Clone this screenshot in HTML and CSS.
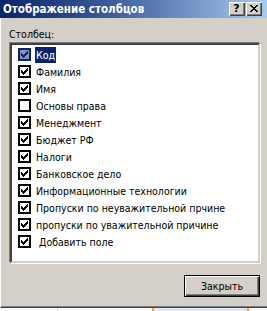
FILE: index.html
```html
<!DOCTYPE html>
<html>
<head>
<meta charset="utf-8">
<link rel="stylesheet" href="styles.css">
</head>
<body>
<div class="window">
  <div class="titlebar">
    <span class="title">Отображение столбцов</span>
    <div class="tbtns">
      <span class="tbtn help">?</span>
      <span class="tbtn close"><svg width="8" height="7" viewBox="0 0 8 7"><path d="M0 0h2v1h-2z M6 0h2v1h-2z M1 1h2v1h-2z M5 1h2v1h-2z M2 2h4v1h-4z M3 3h2v1h-2z M2 4h4v1h-4z M1 5h2v1h-2z M5 5h2v1h-2z M0 6h2v1h-2z M6 6h2v1h-2z" fill="#000"/></svg></span>
    </div>
  </div>
  <div class="content">
    <div class="label">Столбец:</div>
    <div class="listbox">
      <div class="row selected"><span class="cb"><svg width="7" height="7" viewBox="0 0 7 7"><path d="M0 2V5H1V6H2V7H3V6H4V5H5V4H6V3H7V0H6V1H5V2H4V3H3V4H2V3H1V2Z"/></svg></span><span class="txt">Код</span></div>
      <div class="row"><span class="cb"><svg width="7" height="7" viewBox="0 0 7 7"><path d="M0 2V5H1V6H2V7H3V6H4V5H5V4H6V3H7V0H6V1H5V2H4V3H3V4H2V3H1V2Z"/></svg></span><span class="txt">Фамилия</span></div>
      <div class="row"><span class="cb"><svg width="7" height="7" viewBox="0 0 7 7"><path d="M0 2V5H1V6H2V7H3V6H4V5H5V4H6V3H7V0H6V1H5V2H4V3H3V4H2V3H1V2Z"/></svg></span><span class="txt">Имя</span></div>
      <div class="row"><span class="cb"></span><span class="txt">Основы права</span></div>
      <div class="row"><span class="cb"><svg width="7" height="7" viewBox="0 0 7 7"><path d="M0 2V5H1V6H2V7H3V6H4V5H5V4H6V3H7V0H6V1H5V2H4V3H3V4H2V3H1V2Z"/></svg></span><span class="txt">Менеджмент</span></div>
      <div class="row"><span class="cb"><svg width="7" height="7" viewBox="0 0 7 7"><path d="M0 2V5H1V6H2V7H3V6H4V5H5V4H6V3H7V0H6V1H5V2H4V3H3V4H2V3H1V2Z"/></svg></span><span class="txt">Бюджет РФ</span></div>
      <div class="row"><span class="cb"><svg width="7" height="7" viewBox="0 0 7 7"><path d="M0 2V5H1V6H2V7H3V6H4V5H5V4H6V3H7V0H6V1H5V2H4V3H3V4H2V3H1V2Z"/></svg></span><span class="txt">Налоги</span></div>
      <div class="row"><span class="cb"><svg width="7" height="7" viewBox="0 0 7 7"><path d="M0 2V5H1V6H2V7H3V6H4V5H5V4H6V3H7V0H6V1H5V2H4V3H3V4H2V3H1V2Z"/></svg></span><span class="txt">Банковское дело</span></div>
      <div class="row"><span class="cb"><svg width="7" height="7" viewBox="0 0 7 7"><path d="M0 2V5H1V6H2V7H3V6H4V5H5V4H6V3H7V0H6V1H5V2H4V3H3V4H2V3H1V2Z"/></svg></span><span class="txt">Информационные технологии</span></div>
      <div class="row"><span class="cb"><svg width="7" height="7" viewBox="0 0 7 7"><path d="M0 2V5H1V6H2V7H3V6H4V5H5V4H6V3H7V0H6V1H5V2H4V3H3V4H2V3H1V2Z"/></svg></span><span class="txt">Пропуски по неуважительной прчине</span></div>
      <div class="row"><span class="cb"><svg width="7" height="7" viewBox="0 0 7 7"><path d="M0 2V5H1V6H2V7H3V6H4V5H5V4H6V3H7V0H6V1H5V2H4V3H3V4H2V3H1V2Z"/></svg></span><span class="txt">пропуски по уважительной причине</span></div>
      <div class="row"><span class="cb"><svg width="7" height="7" viewBox="0 0 7 7"><path d="M0 2V5H1V6H2V7H3V6H4V5H5V4H6V3H7V0H6V1H5V2H4V3H3V4H2V3H1V2Z"/></svg></span><span class="txt">&nbsp;Добавить поле</span></div>
    </div>
    <div class="footer">
      <button class="btn">Закрыть</button>
    </div>
  </div>
</div>
<div class="under">
  <span class="u1"></span><span class="u2"></span><span class="u3"></span><span class="u4"></span>
</div>
</body>
</html>
```
FILE: styles.css
```css
html, body {
  margin: 0;
  padding: 0;
}
body {
  width: 267px;
  height: 311px;
  overflow: hidden;
  background: #fbfbfb;
  font-family: "DejaVu Sans Condensed", "DejaVu Sans", Verdana, sans-serif;
  font-size: 10.5px;
  color: #000;
}
.window {
  width: 267px;
  height: 308px;
  box-sizing: border-box;
  background: #d4d0c8;
  border-left: 1px solid #fff;
  border-bottom: 1px solid #404040;
  box-shadow: inset 0 -1px 0 #808080;
  display: flex;
  flex-direction: column;
}
.titlebar {
  height: 18px;
  margin-left: -1px;
  padding-left: 3px;
  background: linear-gradient(to right, #0a246a, #3a5a98 40%, #a6caf0);
  display: flex;
  align-items: center;
  justify-content: space-between;
}
.title {
  color: #fff;
  font-weight: bold;
  font-size: 11.5px;
  line-height: 18px;
}
.tbtns {
  display: flex;
  gap: 1px;
  padding-right: 5px;
}
.tbtn {
  width: 16px;
  height: 14px;
  box-sizing: border-box;
  background: #d4d0c8;
  box-shadow: inset 1px 1px 0 #fff, inset -1px -1px 0 #404040, inset -2px -2px 0 #808080;
  display: flex;
  align-items: center;
  justify-content: center;
}
.help {
  font-family: "DejaVu Sans", sans-serif;
  font-weight: bold;
  font-size: 11px;
  line-height: 14px;
  padding-right: 1px;
}
.close svg {
  display: block;
  margin-top: -1px;
}
.content {
  padding: 10px 7px 0 8px;
  display: flex;
  flex-direction: column;
}
.label {
  line-height: 13px;
  height: 13px;
  margin-bottom: 2px;
}
.listbox {
  height: 220px;
  box-sizing: border-box;
  background: #fff;
  border: 2px solid;
  border-color: #404040 #d4d0c8 #d4d0c8 #404040;
  box-shadow: -1px -1px 0 #808080, 1px 1px 0 #fff;
  margin-left: 1px;
  width: 250px;
  padding: 1px 0 0 6px;
}
.row {
  height: 17px;
  display: flex;
  align-items: center;
}
.cb {
  width: 13px;
  height: 13px;
  box-sizing: border-box;
  border: 2px solid #000;
  background: #fff;
  display: flex;
  align-items: center;
  justify-content: center;
  flex: none;
}
.cb svg {
  display: block;
  fill: #000;
}
.txt {
  margin-left: 4px;
  padding: 0 1px;
  line-height: 16px;
  white-space: pre;
}
.selected .cb {
  border-color: #0a246a;
  background: #8691b5;
}
.selected .cb svg {
  fill: #0a246a;
}
.selected .txt {
  background: #0a246a;
  color: #fff;
}
.footer {
  margin-top: 12px;
  display: flex;
  justify-content: flex-end;
}
.btn {
  width: 76px;
  height: 22px;
  box-sizing: border-box;
  margin: 0;
  padding: 0;
  font-family: "DejaVu Sans Condensed", "DejaVu Sans", Verdana, sans-serif;
  font-size: 10.5px;
  color: #000;
  background: #d4d0c8;
  border: 1px solid #000;
  box-shadow: inset 1px 1px 0 #fff, inset -1px -1px 0 #404040, inset -2px -2px 0 #808080;
}
.under {
  height: 3px;
  display: flex;
}
.u1 { border-left: 1px solid #d8d8ec; margin-left: 57px; box-sizing: border-box; width: 95px; }
.u2 { width: 2px; background: #f5a540; }
.u3 { width: 93px; background: #e4e6f4; }
.u4 { width: 2px; background: #f5a540; }
```
